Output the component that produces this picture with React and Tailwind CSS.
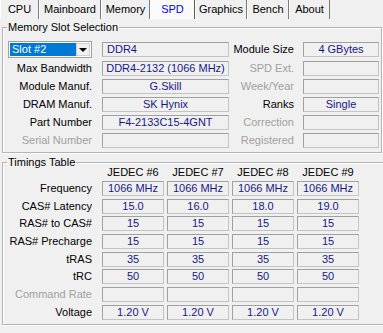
import React from 'react';

const tabs = [
  { name: 'CPU', w: 'w-[39px]' },
  { name: 'Mainboard', w: 'w-[62px]' },
  { name: 'Memory', w: 'w-[49px]' },
  { name: 'SPD', w: 'w-[45px]', active: true },
  { name: 'Graphics', w: 'w-[52px]' },
  { name: 'Bench', w: 'w-[42px]' },
  { name: 'About', w: 'w-[41px]' },
];

const timings = [
  { label: 'Frequency', values: ['1066 MHz', '1066 MHz', '1066 MHz', '1066 MHz'] },
  { label: 'CAS# Latency', values: ['15.0', '16.0', '18.0', '19.0'] },
  { label: 'RAS# to CAS#', values: ['15', '15', '15', '15'] },
  { label: 'RAS# Precharge', values: ['15', '15', '15', '15'] },
  { label: 'tRAS', values: ['35', '35', '35', '35'] },
  { label: 'tRC', values: ['50', '50', '50', '50'] },
  { label: 'Command Rate', values: ['', '', '', ''], disabled: true },
  { label: 'Voltage', values: ['1.20 V', '1.20 V', '1.20 V', '1.20 V'] },
];

// sunken read-only text box
const Field = ({ children, className = '', align = 'center' }) => (
  <div
    className={`h-[15px] flex items-center border border-t-[#a0a0a0] border-l-[#a0a0a0] border-b-[#c4c4c4] border-r-[#c4c4c4] text-[#17178c] leading-none whitespace-nowrap ${
      align === 'left' ? 'justify-start pl-[4px]' : 'justify-center'
    } ${className}`}
  >
    {children}
  </div>
);

const Label = ({ children, disabled, className = '' }) => (
  <div className={`text-right leading-none whitespace-nowrap ${disabled ? 'text-[#a0a0a0]' : 'text-black'} ${className}`}>
    {children}
  </div>
);

const Group = ({ title, className = '', children }) => (
  <div className={`relative border border-[#b4b4b4] shadow-[inset_1px_1px_0_#ffffff,1px_1px_0_#ffffff] ${className}`}>
    <span className="absolute -top-[8px] left-[4px] px-[1px] bg-[#f0f0f0] leading-[14px] text-black">{title}</span>
    {children}
  </div>
);

export default function App() {
  return (
    <div className="w-[383px] h-[333px] overflow-hidden bg-[#f0f0f0] text-[11px] text-black" style={{ fontFamily: '"Liberation Sans", Arial, sans-serif' }}>
      {/* Tab strip */}
      <div className="flex h-[19px]">
        {tabs.map((t) => (
          <div
            key={t.name}
            className={`${t.w} h-full flex items-center justify-center border-l border-white border-r ${
              t.active ? 'bg-[#fafafa] text-[#0000ff] border-r-[#5a5a5a]' : 'bg-[#f0f0f0] border-r-[#7a7a7a]'
            }`}
          >
            {t.name}
          </div>
        ))}
      </div>

      {/* Memory Slot Selection */}
      <Group title="Memory Slot Selection" className="mt-[8px] ml-[2px] w-[380px] pt-[13px] pb-[4px]">
        <div className="flex flex-col gap-[3px]">
          <div className="flex items-center h-[17px]">
            <div className="w-[89px] pl-[5px] flex">
              <div className="w-[84px] h-[17px] bg-white border border-[#a0a0a0] flex p-[1px]">
                <div className="flex-1 bg-[#0078d7] text-white flex items-center pl-[2px] leading-none">Slot #2</div>
                <div className="w-[14px] flex items-center justify-center bg-[#f0f0f0] border border-[#d0d0d0]">
                  <div className="w-0 h-0 border-l-[4px] border-r-[4px] border-t-[4px] border-l-transparent border-r-transparent border-t-black" />
                </div>
              </div>
            </div>
            <Field className="ml-[10px] w-[127px]" align="left">DDR4</Field>
            <Label className="w-[65px]">Module Size</Label>
            <Field className="ml-[9px] w-[76px]">4 GBytes</Field>
          </div>
          {[
            ['Max Bandwidth', false, 'DDR4-2132 (1066 MHz)', 'SPD Ext.', true, ''],
            ['Module Manuf.', false, 'G.Skill', 'Week/Year', true, ''],
            ['DRAM Manuf.', false, 'SK Hynix', 'Ranks', false, 'Single'],
            ['Part Number', false, 'F4-2133C15-4GNT', 'Correction', true, ''],
            ['Serial Number', true, '', 'Registered', true, ''],
          ].map(([l1, d1, v1, l2, d2, v2]) => (
            <div key={l1} className="flex items-center h-[15px]">
              <Label disabled={d1} className="w-[89px]">{l1}</Label>
              <Field className="ml-[10px] w-[127px]">{v1}</Field>
              <Label disabled={d2} className="w-[65px]">{l2}</Label>
              <Field className="ml-[9px] w-[76px]">{v2}</Field>
            </div>
          ))}
        </div>
      </Group>

      {/* Timings Table */}
      <Group title="Timings Table" className="mt-[9px] ml-[2px] w-[383px] pt-[3px] pb-[4px]">
        <div className="flex items-center h-[13px] pl-[99px] gap-[3px]">
          {['JEDEC #6', 'JEDEC #7', 'JEDEC #8', 'JEDEC #9'].map((h) => (
            <div key={h} className="w-[62px] text-center leading-none">{h}</div>
          ))}
        </div>
        <div className="flex flex-col gap-[2.7px] mt-[2px]">
          {timings.map((row) => (
            <div key={row.label} className="flex items-center h-[15px]">
              <Label disabled={row.disabled} className="w-[89px]">{row.label}</Label>
              <div className="ml-[10px] flex gap-[3px]">
                {row.values.map((v, i) => (
                  <Field key={i} className="w-[62px]">{v}</Field>
                ))}
              </div>
            </div>
          ))}
        </div>
      </Group>
    </div>
  );
}
